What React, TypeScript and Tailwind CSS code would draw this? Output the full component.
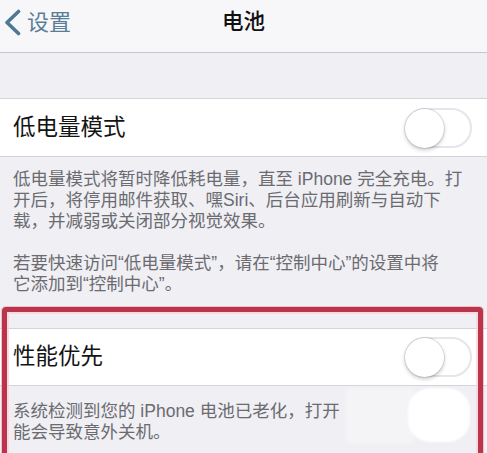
import React from 'react';

const Toggle: React.FC = () => (
  <div className="relative h-[40px] w-[67px] rounded-full border-2 border-[#e5e5ea] bg-white">
    <div className="absolute left-[-2px] top-[-1px] h-[39px] w-[39px] rounded-full bg-white shadow-[0_2px_4px_rgba(0,0,0,0.22),0_0_0_1px_rgba(0,0,0,0.1)]" />
  </div>
);

const Row: React.FC<{ label: string; top?: boolean }> = ({ label, top }) => (
  <div
    className={`flex h-[58px] items-center justify-between border-b border-[#d3d3d8] bg-white pl-[13px] pr-[15px] ${
      top ? 'border-t' : ''
    }`}
  >
    <span className="text-[22.5px] text-[#141414]">{label}</span>
    <Toggle />
  </div>
);

export default function App() {
  return (
    <div className="relative min-h-[453px] overflow-hidden bg-[#efeff4] font-['Liberation_Sans','Noto_Sans_CJK_SC',sans-serif]">
      {/* nav bar */}
      <div className="grid h-[53px] grid-cols-[1fr_auto_1fr] items-center border-b border-[#c8c7cc] bg-[#f7f7fa] pb-[7px]">
        <div className="flex items-center pl-[4px]">
          <svg width="17" height="27" viewBox="0 0 17 27" fill="none">
            <path d="M14.5 2.5 L3 13.5 L14.5 24.5" stroke="#4f7894" strokeWidth="3.6" strokeLinecap="round" strokeLinejoin="round" />
          </svg>
          <span className="ml-[6px] text-[22px] text-[#5a7e97]">设置</span>
        </div>
        <span className="text-[21.5px] font-medium text-[#111]">电池</span>
        <div />
      </div>

      <div className="h-[46px] border-b border-[#d3d3d8]" />

      <Row label="低电量模式" />

      <div className="px-[13px] pb-[33px] pt-[12px] text-[17.5px] leading-[21px] text-[#6b6b70]">
        <p>
          低电量模式将暂时降低耗电量，直至 iPhone 完全充电。打
          <br />
          开后，将停用邮件获取、嘿Siri、后台应用刷新与自动下
          <br />
          载，并减弱或关闭部分视觉效果。
        </p>
        <p className="mt-[21px]">
          若要快速访问“低电量模式”，请在“控制中心”的设置中将
          <br />
          它添加到“控制中心”。
        </p>
      </div>

      <Row label="性能优先" top />

      <div className="relative px-[13px] pt-[15px] text-[17.5px] leading-[21px] text-[#6b6b70]">
        <p>
          系统检测到您的 iPhone 电池已老化，打开
          <br />
          能会导致意外关机。
        </p>
        {/* erased part of the screenshot */}
        <div className="absolute left-[345px] top-[2px] h-[56px] w-[70px] bg-[#f4f4f6] blur-[2px]" />
        <div className="absolute left-[408px] top-[2px] h-[54px] w-[62px] rounded-[22px] bg-white blur-[1px]" />
      </div>

      {/* red annotation frame */}
      <div className="pointer-events-none absolute left-[2px] top-[307px] h-[170px] w-[481px] rounded-[4px] border-[5px] border-[#b8354b] shadow-[inset_0_0_0_2px_rgba(255,210,218,0.8),0_0_0_1px_rgba(235,160,172,0.6)]" />
    </div>
  );
}
